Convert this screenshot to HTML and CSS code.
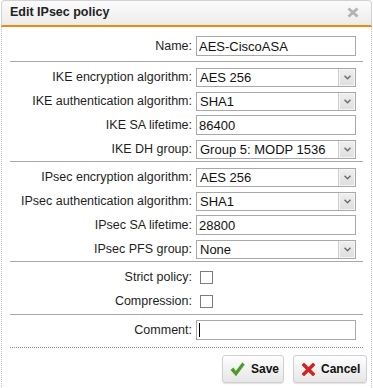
FILE: index.html
```html
<!DOCTYPE html>
<html lang="en">
<head>
  <meta charset="UTF-8" />
  <meta name="viewport" content="width=device-width, initial-scale=1.0"/>
  <link rel="stylesheet" href="styles.css">
</head>
<body>

  <div class="dialog">
    <!-- Title bar -->
    <div class="titlebar">
      <span class="title">Edit IPsec policy</span>
      <svg class="close" width="12" height="11" viewBox="0 0 12 11">
        <path d="M1.5 1.5 L10.5 9.5 M10.5 1.5 L1.5 9.5" stroke="#b4b4b4" stroke-width="3" fill="none"/>
      </svg>
    </div>

    <form class="policy-form" onsubmit="return false">
      <div class="section first">
        <div class="row">
          <label class="lbl" for="name">Name:</label>
          <input class="text" id="name" type="text" value="AES-CiscoASA">
        </div>
      </div>
      <hr class="sep">

      <div class="section">
        <div class="row">
          <label class="lbl">IKE encryption algorithm:</label>
          <div class="select"><span class="val">AES 256</span><span class="arrow"><svg width="7" height="5" viewBox="0 0 7 5"><path d="M0.5 0.8 L3.5 3.8 L6.5 0.8" stroke="#6e6e6e" stroke-width="1.5" fill="none"/></svg></span></div>
        </div>
        <div class="row">
          <label class="lbl">IKE authentication algorithm:</label>
          <div class="select"><span class="val">SHA1</span><span class="arrow"><svg width="7" height="5" viewBox="0 0 7 5"><path d="M0.5 0.8 L3.5 3.8 L6.5 0.8" stroke="#6e6e6e" stroke-width="1.5" fill="none"/></svg></span></div>
        </div>
        <div class="row">
          <label class="lbl">IKE SA lifetime:</label>
          <input class="text" type="text" value="86400">
        </div>
        <div class="row">
          <label class="lbl">IKE DH group:</label>
          <div class="select"><span class="val">Group 5: MODP 1536</span><span class="arrow"><svg width="7" height="5" viewBox="0 0 7 5"><path d="M0.5 0.8 L3.5 3.8 L6.5 0.8" stroke="#6e6e6e" stroke-width="1.5" fill="none"/></svg></span></div>
        </div>
      </div>
      <hr class="sep">

      <div class="section">
        <div class="row">
          <label class="lbl">IPsec encryption algorithm:</label>
          <div class="select"><span class="val">AES 256</span><span class="arrow"><svg width="7" height="5" viewBox="0 0 7 5"><path d="M0.5 0.8 L3.5 3.8 L6.5 0.8" stroke="#6e6e6e" stroke-width="1.5" fill="none"/></svg></span></div>
        </div>
        <div class="row">
          <label class="lbl">IPsec authentication algorithm:</label>
          <div class="select"><span class="val">SHA1</span><span class="arrow"><svg width="7" height="5" viewBox="0 0 7 5"><path d="M0.5 0.8 L3.5 3.8 L6.5 0.8" stroke="#6e6e6e" stroke-width="1.5" fill="none"/></svg></span></div>
        </div>
        <div class="row">
          <label class="lbl">IPsec SA lifetime:</label>
          <input class="text" type="text" value="28800">
        </div>
        <div class="row">
          <label class="lbl">IPsec PFS group:</label>
          <div class="select"><span class="val">None</span><span class="arrow"><svg width="7" height="5" viewBox="0 0 7 5"><path d="M0.5 0.8 L3.5 3.8 L6.5 0.8" stroke="#6e6e6e" stroke-width="1.5" fill="none"/></svg></span></div>
        </div>
      </div>
      <hr class="sep">

      <div class="section checks">
        <div class="row">
          <label class="lbl" for="strict">Strict policy:</label>
          <div><input class="check" id="strict" type="checkbox"></div>
        </div>
        <div class="row">
          <label class="lbl" for="compress">Compression:</label>
          <div><input class="check" id="compress" type="checkbox"></div>
        </div>
      </div>
      <hr class="sep">

      <div class="section last">
        <div class="row">
          <label class="lbl" for="comment">Comment:</label>
          <div class="caret-wrap">
            <input class="text" id="comment" type="text" value="">
            <span class="caret"></span>
          </div>
        </div>
      </div>
      <hr class="sep dotted">

      <!-- Buttons -->
      <div class="footer">
        <button class="btn save" type="submit">
          <svg width="15" height="15" viewBox="0 0 15 15">
            <path d="M0.5 8 L3.4 5.6 L5.8 9 L12.2 0.6 L14.8 2.4 L6 14.2 Z" fill="#4c9c2a"/>
          </svg>
          Save
        </button>
        <button class="btn cancel" type="button">
          <svg width="13" height="13" viewBox="0 0 13 13">
            <path d="M2 2 L11 11 M11 2 L2 11" stroke="#d42020" stroke-width="3.4" stroke-linecap="square" fill="none"/>
          </svg>
          Cancel
        </button>
      </div>
    </form>
  </div>

</body>
</html>
```

FILE: styles.css
```css
* {
  margin: 0;
  padding: 0;
  box-sizing: border-box;
}

html, body {
  height: 100%;
  background: #fff;
  font-family: "Liberation Sans", Arial, sans-serif;
  font-size: 12.5px;
  color: #1e1e1e;
  overflow: hidden;
}

.dialog {
  margin-left: 1px;
  width: 371px;
  min-height: 100%;
  display: flex;
  flex-direction: column;
  background: #fff;
}

.titlebar {
  height: 27px;
  display: flex;
  align-items: center;
  justify-content: space-between;
  padding: 0 12px 2px 8px;
  background: linear-gradient(#fbfbfb, #ececec);
  border: 1px solid #d2d2d2;
  border-bottom: 2px solid #ee8a0b;
  border-radius: 4px 4px 0 0;
}

.title {
  font-weight: bold;
  font-size: 12.5px;
  color: #222;
}

.close {
  display: block;
  margin-top: 1px;
}

.policy-form {
  flex: 1;
  border-left: 1px dotted #c4c4c4;
  border-right: 1px dotted #c4c4c4;
}

.section {
  padding: 3px 0 0;
}

.section.first {
  padding: 7px 0 3px;
}

.section.checks {
  padding: 3px 0 1px;
}

.section.last {
  padding: 3px 0 5px;
}

.row {
  height: 24px;
  display: grid;
  grid-template-columns: 190px 160px;
  column-gap: 4px;
  align-items: center;
}

.lbl {
  text-align: right;
  white-space: nowrap;
}

.sep {
  border: none;
  border-top: 1px solid #a8a8a8;
  margin: 0 8px;
}

.sep.dotted {
  border-top: 1px dotted #8c8c8c;
}

.text {
  display: block;
  width: 160px;
  height: 20px;
  border: 1px solid #a9a9a9;
  padding: 0 2px;
  font-family: inherit;
  font-size: 13px;
  color: #111;
  outline: none;
}

.select {
  width: 160px;
  height: 19px;
  border: 1px solid #a9a9a9;
  display: flex;
  align-items: center;
  justify-content: space-between;
  font-size: 13px;
  color: #111;
  padding-left: 3px;
}

.val {
  white-space: nowrap;
}

.arrow {
  width: 17px;
  height: 17px;
  display: flex;
  align-items: center;
  justify-content: center;
  background: linear-gradient(#efefef, #dedede);
  border-left: 1px solid #cdcdcd;
  box-shadow: inset 0 0 0 1px #f6f6f6;
}

.arrow svg {
  display: block;
}

.check {
  appearance: none;
  display: block;
  width: 13px;
  height: 13px;
  margin-left: 4px;
  border: 1px solid #7c7c7c;
  background: #fff;
}

.caret-wrap {
  position: relative;
}

.caret {
  position: absolute;
  left: 3px;
  top: 3px;
  width: 1px;
  height: 14px;
  background: #000;
}

.footer {
  display: flex;
  justify-content: flex-end;
  gap: 9px;
  padding: 7px 4px 0 0;
}

.btn {
  height: 28px;
  display: flex;
  align-items: center;
  gap: 6px;
  border: 1px solid #d0d0d0;
  border-radius: 3px;
  background: linear-gradient(#fefefe, #e6e6e6);
  box-shadow: 0 1px 1px rgba(0, 0, 0, 0.12);
  font-family: "Liberation Sans", Arial, sans-serif;
  font-weight: bold;
  font-size: 12px;
  color: #111;
  cursor: pointer;
}

.btn svg {
  display: block;
  flex: none;
}

.btn.save {
  width: 62px;
  padding: 0 4px 0 7px;
  gap: 6px;
}

.btn.cancel {
  width: 74px;
  padding: 0 4px 0 8px;
  gap: 6px;
}
```
